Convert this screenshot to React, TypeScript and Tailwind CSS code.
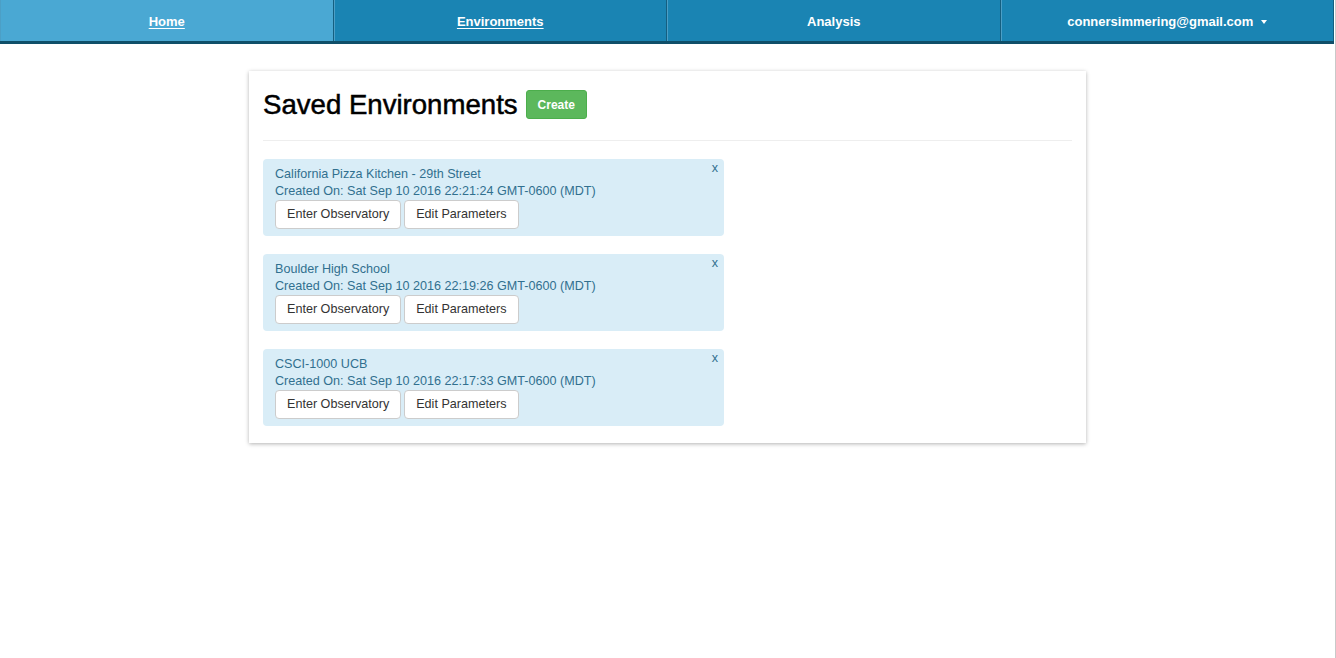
import React from 'react';

interface SavedEnv {
  name: string;
  created: string;
}

const environments: SavedEnv[] = [
  { name: 'California Pizza Kitchen - 29th Street', created: 'Sat Sep 10 2016 22:21:24 GMT-0600 (MDT)' },
  { name: 'Boulder High School', created: 'Sat Sep 10 2016 22:19:26 GMT-0600 (MDT)' },
  { name: 'CSCI-1000 UCB', created: 'Sat Sep 10 2016 22:17:33 GMT-0600 (MDT)' },
];

const navItems = [
  { label: 'Home', active: true, underline: true },
  { label: 'Environments', active: false, underline: true },
  { label: 'Analysis', active: false, underline: false },
];

function NavBar() {
  return (
    <nav className="flex h-[44px] border-b-[3px] border-[#0f4f69] mr-[1px]">
      {navItems.map((item) => (
        <a
          key={item.label}
          href="#"
          className={`flex-1 flex items-center justify-center pt-[2px] border-l border-[#4c9fc6] border-r-[#155f80] border-r text-[13px] font-bold text-white ${
            item.active ? 'bg-[#4aa8d3]' : 'bg-[#1a84b3]'
          } ${item.underline ? 'underline underline-offset-2' : ''}`}
        >
          {item.label}
        </a>
      ))}
      <button className="flex-1 flex items-center justify-center pt-[2px] border-l border-[#4c9fc6] border-r-[#155f80] border-r bg-[#1a84b3] text-[13px] font-bold text-white">
        connersimmering@gmail.com
        <span className="ml-[8px] mt-[1px] w-0 h-0 border-t-[4px] border-t-white border-x-[3px] border-x-transparent" />
      </button>
    </nav>
  );
}

function EnvCard({ env }: { env: SavedEnv }) {
  return (
    <div className="relative w-[461px] rounded-[4px] bg-[#d9edf7] text-[#31708f] px-[12px] pt-[7px] pb-[7px]">
      <button className="absolute right-[6px] top-[1px] text-[12.6px] leading-[17px] text-[#31708f]">x</button>
      <div className="leading-[17px]">{env.name}</div>
      <div className="leading-[17px]">Created On: {env.created}</div>
      <div className="flex gap-[3px]">
        <button className="h-[29px] px-[11px] bg-white border border-[#cccccc] rounded-[4px] text-[#333333]">
          Enter Observatory
        </button>
        <button className="h-[29px] px-[11px] bg-white border border-[#cccccc] rounded-[4px] text-[#333333]">
          Edit Parameters
        </button>
      </div>
    </div>
  );
}

export default function App() {
  return (
    <div className="min-h-screen bg-white border-r border-[#c9c9c9] font-['Liberation_Sans',Arial,sans-serif] text-[12.6px]">
      <NavBar />

      <div className="mx-auto mt-[27px] w-[837px] bg-white shadow-[0_1px_4px_rgba(0,0,0,0.3)] px-[14px] pt-[19px] pb-[17px]">
        <div className="flex items-center gap-[8px] h-[29px]">
          <h2 className="text-[27.6px] leading-none text-black [-webkit-text-stroke:0.5px_black]">Saved Environments</h2>
          <button className="h-[29px] px-[11px] rounded-[3px] bg-[#5cb85c] border border-[#4cae4c] text-white text-[12px] font-bold">
            Create
          </button>
        </div>

        <hr className="mt-[21px] mb-[18px] border-0 border-t border-[#eeeeee]" />

        <div className="flex flex-col gap-[18px]">
          {environments.map((env) => (
            <EnvCard key={env.name} env={env} />
          ))}
        </div>
      </div>
    </div>
  );
}
